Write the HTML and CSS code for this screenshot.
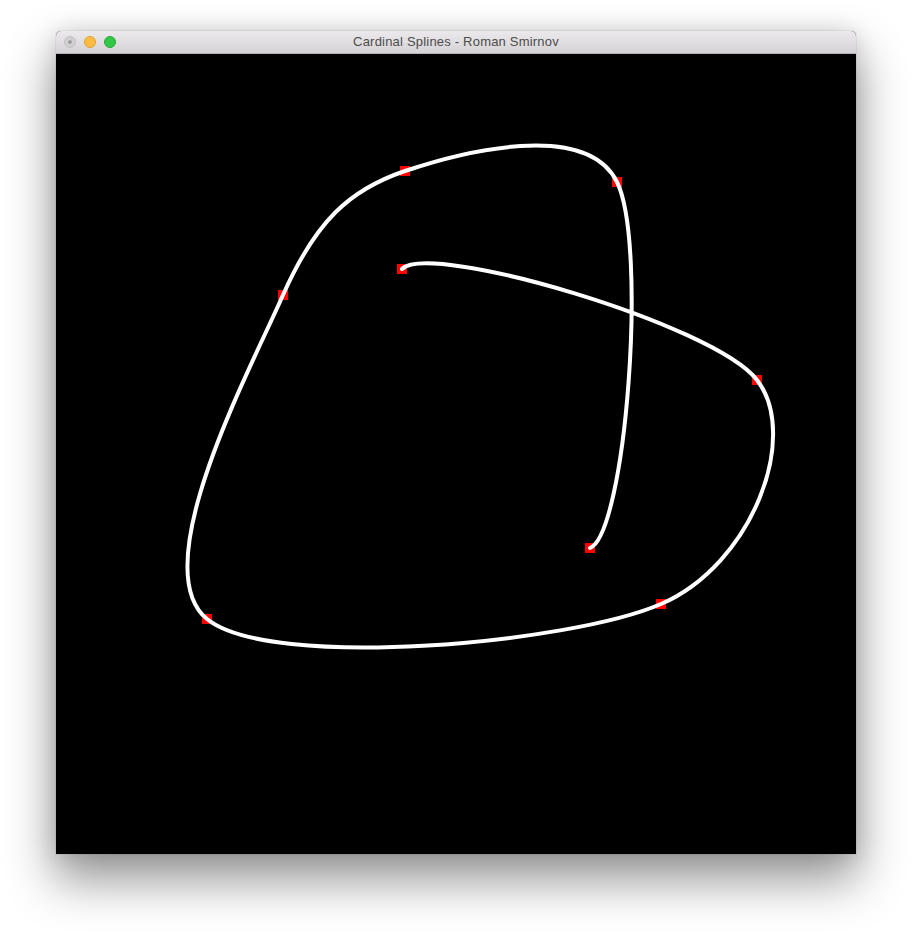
FILE: index.html
```html
<!DOCTYPE html>
<html>
<head>
<meta charset="utf-8">
<title>Cardinal Splines - Roman Smirnov</title>
<link rel="stylesheet" href="styles.css">
</head>
<body>
<div class="stage">
  <div class="window">
    <div class="titlebar">
      <div class="lights">
        <span class="light close"></span>
        <span class="light minimize"></span>
        <span class="light zoom"></span>
      </div>
      <div class="title">Cardinal Splines - Roman Smirnov</div>
    </div>
    <div class="canvas">
      <svg width="800" height="800" viewBox="0 0 800 800">
        <g class="points">
          <rect x="341" y="210" width="10" height="10"/>
          <rect x="696" y="321" width="10" height="10"/>
          <rect x="600" y="545" width="10" height="10"/>
          <rect x="146" y="560" width="10" height="10"/>
          <rect x="222" y="236" width="10" height="10"/>
          <rect x="344" y="112" width="10" height="10"/>
          <rect x="556" y="123" width="10" height="10"/>
          <rect x="529" y="489" width="10" height="10"/>
        </g>
        <path class="spline" d="M346 215 C373.83 187 657.83 270.17 701 326 C744.17 381.83 696.67 510.17 605 550 C513.33 589.83 214 616.5 151 565 C88 513.5 194 316.17 227 241 C260 166.83 293.33 135.83 349 117 C404.67 98.17 530.17 65.67 561 128 C591.83 190.83 569.83 479.5 534 494"/>
      </svg>
    </div>
  </div>
</div>
</body>
</html>
```
FILE: styles.css
```css
html, body {
  margin: 0;
  padding: 0;
  background: #ffffff;
}

.stage {
  box-sizing: border-box;
  min-height: 934px;
  padding: 31px 0 0 56px;
}

.window {
  width: 800px;
  border-radius: 5px 5px 0 0;
  box-shadow: 0 24px 48px 2px rgba(0, 0, 0, 0.42), 0 0 22px rgba(0, 0, 0, 0.12), 0 0 0 1px rgba(0, 0, 0, 0.05);
  background: #000;
}

.titlebar {
  position: relative;
  height: 22px;
  border-bottom: 1px solid #b3b1b3;
  border-radius: 5px 5px 0 0;
  background: linear-gradient(#ebe9eb, #d5d3d5);
  display: flex;
  align-items: center;
  justify-content: center;
}

.lights {
  position: absolute;
  left: 8px;
  top: 5px;
  display: flex;
  gap: 8px;
}

.light {
  width: 12px;
  height: 12px;
  border-radius: 50%;
  box-sizing: border-box;
  display: block;
}

.light.close {
  background: radial-gradient(circle, #9b9b9b 0 1.5px, #d0d0d0 2px 100%);
  border: 1px solid #c2c2c2;
}

.light.minimize {
  background: #fdbb40;
  border: 1px solid #e1a23a;
}

.light.zoom {
  background: #33c748;
  border: 1px solid #27aa35;
}

.title {
  font-family: "Liberation Sans", Arial, sans-serif;
  font-size: 13px;
  letter-spacing: 0.2px;
  color: #4c4c4c;
  line-height: 22px;
}

.canvas {
  width: 800px;
  height: 800px;
  background: #000;
}

.canvas svg {
  display: block;
}

.points rect {
  fill: #ff0000;
}

.spline {
  fill: none;
  stroke: #ffffff;
  stroke-width: 4;
  stroke-linecap: round;
  stroke-linejoin: round;
}
```
